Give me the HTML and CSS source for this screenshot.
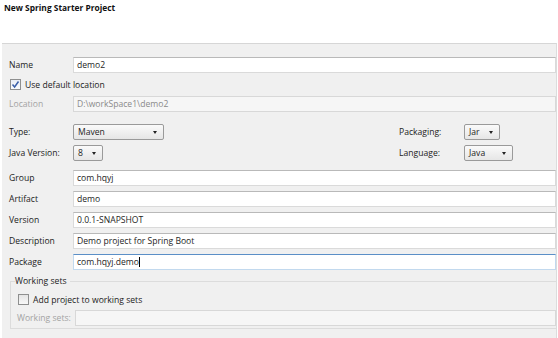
FILE: index.html
```html
<!DOCTYPE html>
<html>
<head>
    <meta charset="utf-8">
    <title>New Spring Starter Project</title>
    <link rel="stylesheet" href="styles.css">
</head>
<body>
    <div class="header">New Spring Starter Project</div>
    <div class="panel">
        <div class="row">
            <span class="label">Name</span>
            <div class="field">demo2</div>
        </div>
        <div class="checkRow">
            <span class="check checked">
                <svg width="9" height="9" viewBox="0 0 9 9"><path d="M1.5 4.5 L3.6 7 L7.5 1.5" fill="none" stroke="#3a5fa8" stroke-width="1.5"/></svg>
            </span>
            <span>Use default location</span>
        </div>
        <div class="row locRow">
            <span class="label disabled">Location</span>
            <div class="field off">D:\workSpace1\demo2</div>
        </div>

        <div class="optGrid">
            <span class="label">Type:</span>
            <div class="combo wType">Maven<i class="arrow"></i></div>
            <span class="label">Packaging:</span>
            <div class="combo wJar">Jar<i class="arrow"></i></div>

            <span class="label">Java Version:</span>
            <div class="combo wJava">8<i class="arrow"></i></div>
            <span class="label">Language:</span>
            <div class="combo wLang">Java<i class="arrow"></i></div>
        </div>

        <div class="row">
            <span class="label">Group</span>
            <div class="field">com.hqyj</div>
        </div>
        <div class="row">
            <span class="label">Artifact</span>
            <div class="field">demo</div>
        </div>
        <div class="row">
            <span class="label">Version</span>
            <div class="field">0.0.1-SNAPSHOT</div>
        </div>
        <div class="row">
            <span class="label">Description</span>
            <div class="field">Demo project for Spring Boot</div>
        </div>
        <div class="row">
            <span class="label">Package</span>
            <div class="field focus">com.hqyj.demo<span class="caret"></span></div>
        </div>

        <fieldset class="sets">
            <legend>Working sets</legend>
            <div class="checkRow">
                <span class="check"></span>
                <span>Add project to working sets</span>
            </div>
            <div class="row setRow">
                <span class="label disabled">Working sets:</span>
                <div class="field off"></div>
            </div>
        </fieldset>
    </div>
</body>
</html>
```

FILE: styles.css
```css
body {
    margin: 0;
    background: #fff;
    font-family: "Open Sans", "Noto Sans", sans-serif;
    font-size: 8.6px;
    color: #222;
    width: 558px;
    height: 338px;
    overflow: hidden;
}
.header {
    height: 43px;
    padding: 2px 0 0 4px;
    box-sizing: border-box;
    font-weight: bold;
    font-size: 8.4px;
    color: #111;
}
.panel {
    margin-left: 2px;
    width: 555px;
    height: 295px;
    box-sizing: border-box;
    background: #f0f0f0;
    border-top: 1px solid #d6d6d6;
    border-right: 1px solid #dcdcdc;
    padding: 13px 0 0 7px;
}
.row {
    display: flex;
    align-items: center;
    height: 16px;
    margin-bottom: 5px;
}
.label {
    width: 64px;
    flex: none;
    white-space: nowrap;
}
.disabled {
    color: #a3a3a3;
}
.field {
    flex: 1;
    height: 16px;
    box-sizing: border-box;
    background: #fff;
    border: 1px solid #dadada;
    border-top-color: #b9b9b9;
    padding: 0 3px;
    line-height: 14px;
    color: #1e1e1e;
}
.field.off {
    background: #f6f6f6;
    color: #8a8a8a;
    border-color: #d8d8d8;
}
.field.focus {
    border-color: #c2d9ee;
    border-top-color: #5b8fc7;
}
.caret {
    display: inline-block;
    width: 1px;
    height: 10px;
    background: #000;
    vertical-align: -2px;
}
.checkRow {
    display: flex;
    align-items: center;
    gap: 4px;
    height: 13px;
    margin: 0 0 5px 1px;
}
.check {
    width: 9px;
    height: 9px;
    border: 1px solid #8e8f8f;
    background: linear-gradient(#e4e4e4, #f8f8f8);
    display: flex;
    align-items: center;
    justify-content: center;
}
.check.checked {
    background: linear-gradient(#e9eef5, #f9fbfd);
}
.locRow {
    margin-bottom: 12px;
}
.optGrid {
    display: grid;
    grid-template-columns: 64px 1fr 65px 49px;
    grid-auto-rows: 16px;
    row-gap: 5px;
    align-items: center;
    padding-right: 43px;
    margin-bottom: 9px;
}
.combo {
    position: relative;
    height: 16px;
    box-sizing: border-box;
    border: 1px solid #9a9a9a;
    border-radius: 2px;
    background: linear-gradient(#fafafa, #e6e6e6);
    padding-left: 4px;
    line-height: 14px;
    color: #1e1e1e;
}
.wType { width: 91px; }
.wJava { width: 30px; }
.wJar { width: 36px; }
.wLang { width: 49px; }
.arrow {
    position: absolute;
    right: 6px;
    top: 6px;
    border-left: 2.5px solid transparent;
    border-right: 2.5px solid transparent;
    border-top: 3px solid #222;
}
.sets {
    margin: 1px 0 0 1px;
    padding: 6px 0 0 6px;
    border: 1px solid #dcdcdc;
    border-right: none;
    height: 46px;
}
.sets legend {
    padding: 0 3px 0 0;
    margin-left: -2px;
}
.sets .checkRow {
    margin-bottom: 4px;
}
.setRow .label {
    width: 58px;
}
```
